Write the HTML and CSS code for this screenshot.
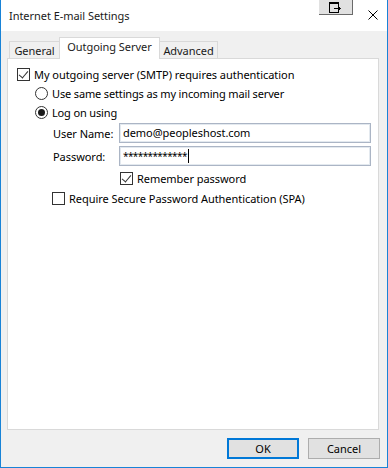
FILE: index.html
```html
<!DOCTYPE html>
<html lang="en">
<head>
  <meta charset="UTF-8">
  <title>Internet E-mail Settings</title>
  <link rel="stylesheet" href="styles.css">
</head>
<body>
  <div class="window">
    <div class="titlebar">
      <span class="title">Internet E-mail Settings</span>
      <button class="tb-button" aria-label="Restore">
        <svg width="13" height="11" viewBox="0 0 13 11">
          <rect x="0.5" y="0.5" width="9" height="10" fill="none" stroke="#000"/>
          <rect x="0" y="0" width="10" height="2" fill="#000"/>
          <path d="M5 6.5h6.5M9.5 4.5l2 2-2 2" fill="none" stroke="#000"/>
        </svg>
      </button>
      <span class="close">
        <svg width="10" height="10" viewBox="0 0 10 10">
          <path d="M0.5 0.5l9 9M9.5 0.5l-9 9" stroke="#000" stroke-width="1"/>
        </svg>
      </span>
    </div>

    <div class="tabs">
      <div class="tab tab-general">General</div>
      <div class="tab tab-outgoing active">Outgoing Server</div>
      <div class="tab tab-advanced">Advanced</div>
    </div>

    <div class="panel">
      <label class="row row-auth">
        <span class="check checked"></span>
        <span>My outgoing server (SMTP) requires authentication</span>
      </label>
      <label class="row row-radio">
        <span class="radio"></span>
        <span>Use same settings as my incoming mail server</span>
      </label>
      <label class="row row-radio">
        <span class="radio selected"></span>
        <span>Log on using</span>
      </label>
      <div class="row field first">
        <span class="field-label">User Name:</span>
        <div class="textbox">demo@peopleshost.com</div>
      </div>
      <div class="row field">
        <span class="field-label">Password:</span>
        <div class="textbox"><span class="masked">*************</span><span class="caret"></span></div>
      </div>
      <label class="row row-remember">
        <span class="check checked"></span>
        <span>Remember password</span>
      </label>
      <label class="row row-spa">
        <span class="check"></span>
        <span>Require Secure Password Authentication (SPA)</span>
      </label>
    </div>

    <div class="actions">
      <button class="btn default">OK</button>
      <button class="btn">Cancel</button>
    </div>
  </div>
</body>
</html>
```

FILE: styles.css
```css
* {
  box-sizing: border-box;
}
body {
  margin: 0;
  font-family: "Noto Sans", "Open Sans", sans-serif;
  font-size: 11px;
  letter-spacing: -0.05px;
  color: #000;
  background: #fff;
}
.window {
  width: 388px;
  height: 468px;
  border: 1px solid #1883d7;
  border-top: none;
  background: #f0f0f0;
  display: flex;
  flex-direction: column;
}
.titlebar {
  height: 31px;
  background: #fff;
  display: flex;
  align-items: flex-start;
}
.title {
  margin: 8px 0 0 8px;
  line-height: 16px;
  color: #1a1a1a;
}
.tb-button {
  margin-left: auto;
  width: 34px;
  height: 15px;
  padding: 0;
  background: #e1e1e1;
  border: none;
  border-right: 1px solid #6a6a6a;
  border-bottom: 1px solid #6a6a6a;
  display: flex;
  justify-content: center;
  align-items: center;
}
.close {
  margin: 10px 9px 0 15px;
  width: 10px;
  height: 10px;
  display: flex;
}
.tabs {
  height: 27px;
  padding-left: 8px;
  display: flex;
  align-items: flex-end;
}
.tab {
  height: 17px;
  line-height: 17px;
  text-align: center;
  border: 1px solid #d9d9d9;
  border-bottom: none;
  background: #f0f0f0;
  color: #1a1a1a;
}
.tab-general {
  width: 51px;
}
.tab-outgoing {
  width: 101px;
  margin-left: -1px;
}
.tab-advanced {
  width: 59px;
  margin-left: -1px;
}
.tab.active {
  height: 22px;
  margin-bottom: -1px;
  line-height: 18px;
  background: #fff;
  position: relative;
  z-index: 1;
}
.panel {
  margin-left: 6px;
  width: 372px;
  height: 372px;
  border: 1px solid #d9d9d9;
  background: #fff;
  padding-top: 6px;
}
.row {
  height: 19px;
  display: flex;
  align-items: center;
  white-space: nowrap;
}
.row-auth {
  padding-left: 9px;
}
.row-radio {
  padding-left: 27px;
  letter-spacing: -0.15px;
}
.field {
  padding-left: 45px;
  height: 20px;
  margin-top: 3px;
}
.field.first {
  margin-top: 1px;
}
.row-remember {
  padding-left: 112px;
  margin-top: 3px;
}
.row-spa {
  padding-left: 44px;
  margin-top: 1px;
}
.check {
  width: 13px;
  height: 13px;
  border: 1px solid #333;
  background: #fff;
  margin-right: 4px;
  flex: none;
  position: relative;
}
.check.checked::after {
  content: "";
  position: absolute;
  left: 3px;
  top: 0px;
  width: 4px;
  height: 8px;
  border-right: 1px solid #333;
  border-bottom: 1px solid #333;
  transform: rotate(40deg);
}
.radio {
  width: 13px;
  height: 13px;
  border: 1px solid #333;
  border-radius: 50%;
  background: #fff;
  margin-right: 4px;
  flex: none;
  display: flex;
  justify-content: center;
  align-items: center;
}
.radio.selected::after {
  content: "";
  width: 7px;
  height: 7px;
  border-radius: 50%;
  background: #1a1a1a;
}
.field-label {
  width: 66px;
  flex: none;
}
.textbox {
  width: 252px;
  height: 20px;
  border: 1px solid #abb5c5;
  box-shadow: inset 0 0 0 1px #e3e9ef;
  padding-left: 3px;
  line-height: 18px;
  display: flex;
  align-items: center;
}
.masked {
  font-size: 10px;
  letter-spacing: -0.6px;
}
.caret {
  display: inline-block;
  width: 1px;
  height: 14px;
  margin-left: 1px;
  background: #000;
}
.actions {
  margin-top: 8px;
  padding-right: 7px;
  display: flex;
  justify-content: flex-end;
  gap: 9px;
}
.btn {
  width: 72px;
  height: 21px;
  padding: 0;
  font: inherit;
  color: #000;
  background: #e1e1e1;
  border: 1px solid #adadad;
}
.btn.default {
  border: 2px solid #0078d7;
}
```
